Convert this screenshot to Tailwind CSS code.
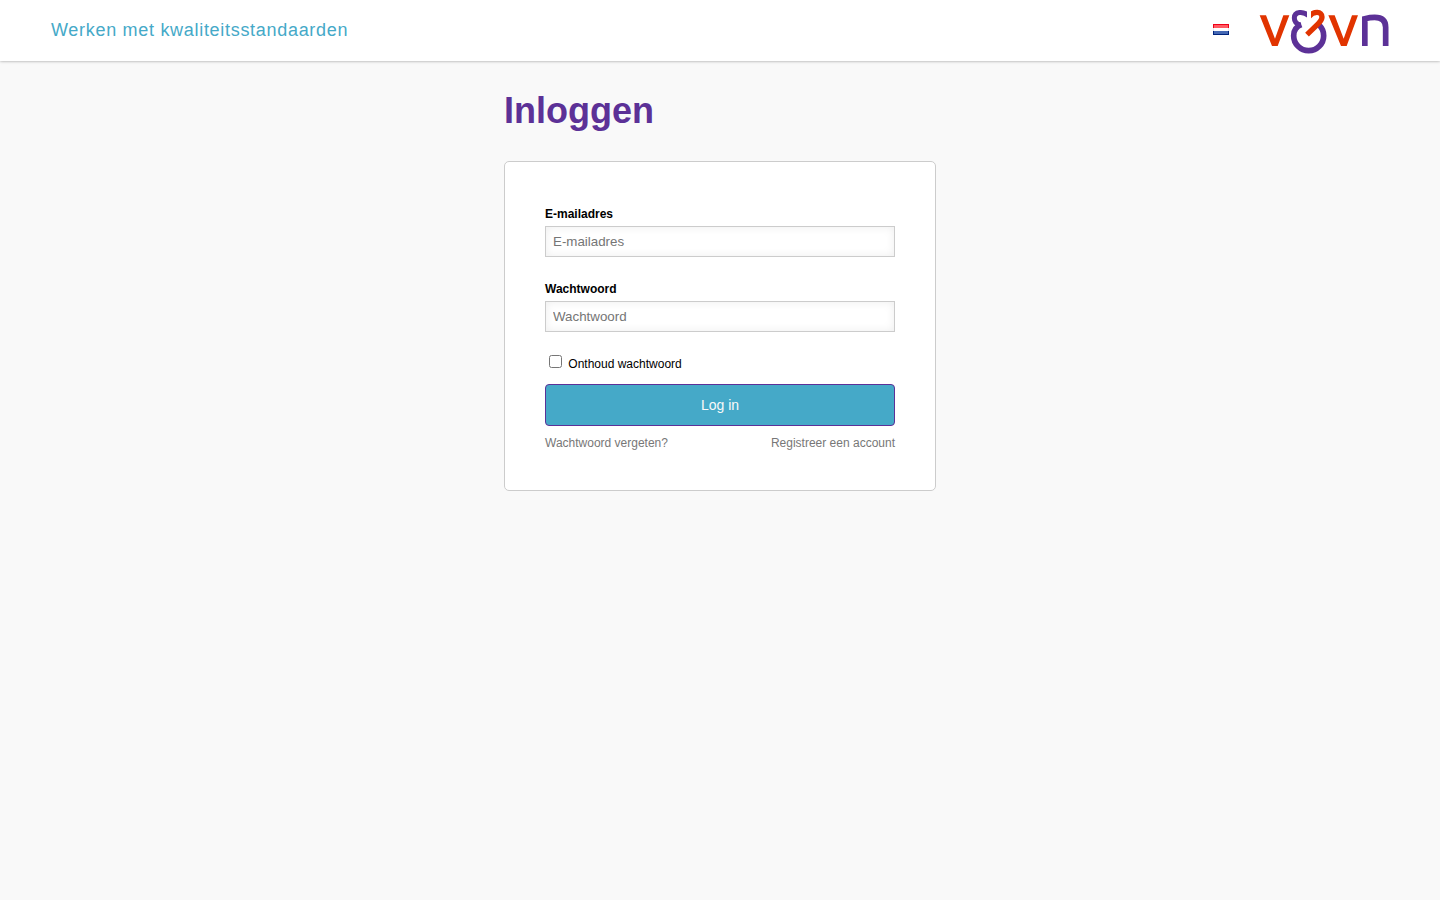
<!DOCTYPE html>
<html lang="nl">
<head>
<meta charset="utf-8">
<title>Inloggen</title>
<script src="https://cdn.jsdelivr.net/npm/@tailwindcss/browser@4"></script>
</head>
<body class="min-h-screen bg-[#f9f9f9] font-['Liberation_Sans',Arial,sans-serif] text-xs text-black">
<header class="flex h-[61px] items-start justify-between bg-white pl-[51px] pr-[50px] shadow-[0_0_3px_rgba(0,0,0,0.4)]">
  <a class="mt-[17px] text-[18px] leading-[26px] tracking-[0.7px] text-[#45a9c8]">Werken met kwaliteitsstandaarden</a>
  <div class="flex items-start">
    <svg class="mt-6 mr-[30px] h-[11px] w-4" viewBox="0 0 16 11" shape-rendering="crispEdges">
      <path fill="#f00018" d="M0 0h16v4H0z"/><path fill="#ff5b63" d="M1 1h14v3H1z"/>
      <path fill="#fff" d="M0 4h16v3H0z"/><path fill="#e6e9ef" d="M0 4h1v3H0zM15 4h1v3h-1z"/>
      <path fill="#00247d" d="M0 7h16v4H0z"/><path fill="#4468b4" d="M1 7h14v3H1z"/>
    </svg>
    <svg class="mt-[9px] h-[46px] w-[131px]" viewBox="27 27 393 138" fill="none">
      <clipPath id="cut-left"><path d="M100 20H171V90H100z"/></clipPath>
      <clipPath id="cut-right"><path d="M183 20H240V130H150V75H183z"/></clipPath>
      <path fill="#e13400" d="M29 46H48L75 116 100 46H118L83 138H66zM235 46H254L281 116 306 46H324L290 138H273z"/>
      <path stroke="#5c3197" stroke-width="15" clip-path="url(#cut-left)" d="M177 48C160 32 133 34 133 54C133 65 140 72 151 76"/>
      <path stroke="#5c3197" stroke-width="17" d="M154 74C138 80 131 93 131 107A45 45 0 0 0 221 107C221 94 216 84 208 76"/>
      <path stroke="#e13400" stroke-width="16" clip-path="url(#cut-right)" d="M177 50C192 32 216 34 216 51C216 59 211 65 205 71L171 104"/>
      <path stroke="#5c3197" stroke-width="17" d="M344.500 138V56Q360 52 374 52Q407 52 407 82V138"/>
    </svg>
  </div>
</header>
<main class="mx-auto w-[432px] pt-[25px]">
  <h1 class="text-[36px] leading-[50px] font-bold text-[#5c3197]">Inloggen</h1>
  <form class="mt-[25px] h-[330px] rounded-[5px] border border-[#ccc] bg-white px-10 pt-[43px]">
    <label class="block h-[21px] leading-[18px] font-bold" for="email">E-mailadres</label>
    <input id="email" type="email" placeholder="E-mailadres" class="block h-[31px] w-full border border-[#ccc] bg-white px-[7px] text-[13.333px] shadow-[inset_0_0_10px_#eee] placeholder:text-[#757575]">
    <label class="mt-[23px] block h-[21px] leading-[18px] font-bold" for="password">Wachtwoord</label>
    <input id="password" type="password" placeholder="Wachtwoord" class="block h-[31px] w-full border border-[#ccc] bg-white px-[7px] text-[13.333px] shadow-[inset_0_0_10px_#eee] placeholder:text-[#757575]">
    <label class="mt-[23px] flex h-[18px] items-start leading-[18px]"><input type="checkbox" class="ml-1 mr-[6.33px] h-[13px] w-[13px]">Onthoud wachtwoord</label>
    <button type="button" class="mt-[11px] block h-[42px] w-full rounded-[4px] border border-[#5c3197] bg-[#45a9c8] text-sm text-[#f9f9f9]">Log in</button>
    <div class="mt-2 flex justify-between leading-[18px] text-[#777]"><a>Wachtwoord vergeten?</a><a>Registreer een account</a></div>
  </form>
</main>
</body>
</html>
